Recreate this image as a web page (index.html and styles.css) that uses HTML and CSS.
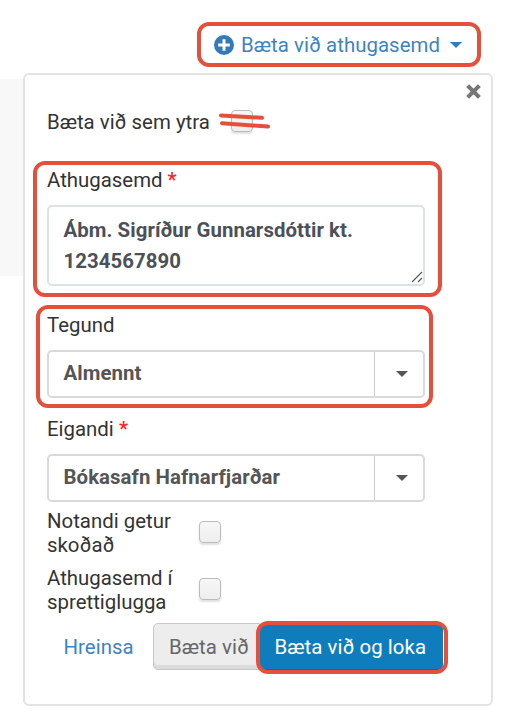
FILE: index.html
```html
<!DOCTYPE html>
<html lang="is">
<head>
  <meta charset="UTF-8">
  <meta name="viewport" content="width=device-width, initial-scale=1.0">
  <title>Bæta við athugasemd</title>
  <link rel="stylesheet" href="styles.css">
</head>
<body>
  <header class="toolbar">
    <a class="toggle">
      <svg class="plus" viewBox="0 0 20 20">
        <circle cx="10" cy="10" r="10" fill="#337ab7"/>
        <path d="M10 4.2v11.6M4.2 10h11.6" stroke="#fff" stroke-width="3"/>
      </svg>
      <span class="text">Bæta við athugasemd</span>
      <span class="caret"></span>
    </a>
  </header>

  <main class="content">
    <form class="panel">
      <svg class="close" viewBox="0 0 14 14">
        <path d="M1.5 1.5l11 11M12.5 1.5l-11 11" stroke="#777" stroke-width="3.9"/>
      </svg>

      <div class="row external">
        <span class="text">Bæta við sem ytra</span>
        <span class="check">
          <svg class="strike" viewBox="0 0 54 20">
            <path d="M4 4.5L45 6.8M5 12.2L51 15.6" stroke="#e5503c" stroke-width="4" stroke-linecap="round"/>
          </svg>
        </span>
      </div>

      <div class="field note">
        <div class="label"><span class="text">Athugasemd</span> <b>*</b></div>
        <div class="textarea">
          <span class="text">Ábm. Sigríður Gunnarsdóttir kt.</span><br><span class="text">1234567890</span>
          <svg class="grip" viewBox="0 0 12 12">
            <path d="M1 11L11 1M7 11l4-4" stroke="#555" stroke-width="1.1"/>
          </svg>
        </div>
      </div>

      <div class="field type">
        <div class="label"><span class="text">Tegund</span></div>
        <div class="select">
          <span class="value"><span class="text">Almennt</span></span>
          <span class="arrow"><span class="caret"></span></span>
        </div>
      </div>

      <div class="field owner">
        <div class="label"><span class="text">Eigandi</span> <b>*</b></div>
        <div class="select">
          <span class="value"><span class="text">Bókasafn Hafnarfjarðar</span></span>
          <span class="arrow"><span class="caret"></span></span>
        </div>
      </div>

      <div class="row visible">
        <span class="name">Notandi getur skoðað</span>
        <span class="check"></span>
      </div>
      <div class="row popup">
        <span class="name">Athugasemd í sprettiglugga</span>
        <span class="check"></span>
      </div>

      <div class="buttons">
        <a class="btn clear">Hreinsa</a>
        <a class="btn add">Bæta við</a>
        <a class="btn save">Bæta við og loka</a>
      </div>
    </form>
  </main>
</body>
</html>
```

FILE: styles.css
```css
:root {
  --mark: #e5503c;
  --link: #337ab7;
  --text: #333;
}

* {
  box-sizing: border-box;
}

body {
  margin: 0;
  height: 719px;
  overflow: hidden;
  background: #fff;
  color: var(--text);
  font-family: Roboto, sans-serif;
  font-size: 20.4px;
  line-height: 24px;
}

.toolbar {
  display: flex;
  height: 79px;
  padding: 22px 29px 0 0;
  justify-content: flex-end;
}

.toggle {
  display: flex;
  align-items: center;
  width: 284px;
  height: 45px;
  padding-left: 13px;
  border: 4px solid var(--mark);
  border-radius: 12px;
  color: #3f83bf;
}

.toggle .text {
  width: 199px;
  padding-top: 1px;
  letter-spacing: 0.05px;
  white-space: nowrap;
}

.plus {
  width: 20px;
  height: 20px;
  margin-right: 7px;
}

.caret {
  width: 0;
  height: 0;
  border: 6px solid transparent;
  border-top-color: #555;
  border-bottom: 0;
}

.toggle .caret {
  margin-left: 10px;
  border-top-color: var(--link);
}

.content {
  height: 197px;
  padding-left: 23px;
  background: linear-gradient(90deg, #f8f8f8 26px, #fff 26px);
}

.panel {
  position: relative;
  width: 470px;
  height: 633px;
  top: -6px;
  padding: 30px 22px 0;
  border: 2px solid #e3e3e3;
  border-radius: 6px;
  background: #fff;
}

.close {
  position: absolute;
  top: 9px;
  right: 10px;
  width: 15px;
  height: 15px;
}

.row {
  display: flex;
  align-items: center;
}

.row .name {
  width: 152px;
  padding-top: 4px;
  padding-right: 14px;
  line-height: 23.5px;
}

.external {
  height: 32px;
  margin-bottom: 31px;
}

.external .text {
  width: 184px;
  padding-top: 2px;
  white-space: nowrap;
}

.check {
  position: relative;
  width: 22px;
  height: 22px;
  border: 1px solid #bbb;
  border-radius: 4px;
  background: linear-gradient(#f7f7f7, #eee);
  box-shadow: 0 2px 2px rgba(0, 0, 0, 0.12);
}

.strike {
  position: absolute;
  left: -15px;
  top: 0;
  width: 54px;
  height: 20px;
}

/* red frame around a field */
.note::after,
.type::after,
.save::after {
  content: "";
  position: absolute;
  border: 4px solid var(--mark);
  border-radius: 12px;
}

.field {
  position: relative;
  width: 378px;
}

.label {
  height: 24px;
  margin-bottom: 13px;
}

.label b {
  color: #f22;
  font-weight: 500;
}

.note::after {
  inset: -7px -17px -11px -14px;
}

.textarea {
  position: relative;
  height: 81px;
  padding: 8px 14.5px;
  border: 2px solid #dde2e7;
  border-radius: 5px;
  color: #4b5159;
  font-weight: 700;
  letter-spacing: 0.06px;
  line-height: 31px;
  white-space: nowrap;
}

.grip {
  position: absolute;
  right: 0;
  bottom: 1px;
  width: 12px;
  height: 12px;
}

.type {
  margin-top: 27px;
}

.type::after {
  inset: -8px -8px -10px -11px;
}

.select {
  display: flex;
  height: 48px;
  border: 2px solid #dadada;
  border-radius: 5px;
}

.value {
  width: 326px;
  padding: 9px 14.5px;
  border-right: 1px solid #ccc;
  color: #555;
  font-weight: 700;
  letter-spacing: 0.06px;
  white-space: nowrap;
}

.arrow {
  display: flex;
  flex: 1;
  align-items: center;
  justify-content: center;
  padding-left: 5px;
}

.owner {
  margin-top: 19px;
}

.visible,
.popup {
  height: 47px;
}

.visible {
  margin-top: 6px;
}

.popup {
  margin-top: 10px;
}

.buttons {
  display: flex;
  height: 47px;
  margin-top: 11px;
}

.btn {
  position: relative;
  height: 47px;
  padding-top: 12px;
  letter-spacing: 0.05px;
  white-space: nowrap;
}

.clear {
  width: 106px;
  padding-left: 16.5px;
  color: #3f83bf;
}

.add {
  width: 107px;
  padding-top: 11px;
  padding-left: 15px;
  border: 1px solid #c8c8c8;
  border-radius: 5px 0 0 5px;
  background: #ededed;
  box-shadow: inset 0 -4px #dcdcdc;
  color: #666;
}

.save {
  width: 183px;
  padding-left: 14.5px;
  border-bottom: 1px solid #0d659c;
  border-radius: 5px;
  background: #0f7dbc;
  color: #fff;
}

.save::after {
  inset: -2px -5px -5px -4px;
}
```
